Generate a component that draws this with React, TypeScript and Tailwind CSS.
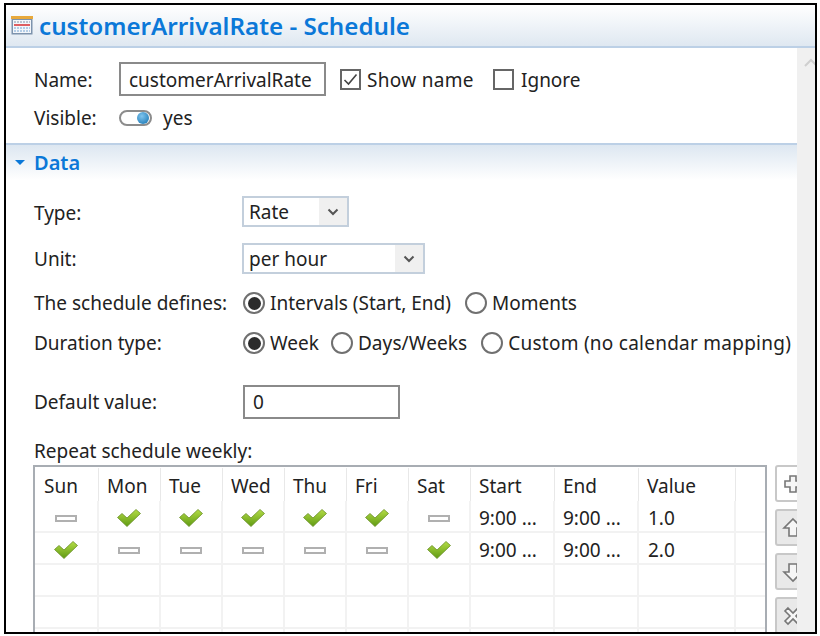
const TABLE_COLS = "grid grid-cols-[64px_62px_62px_62px_62px_62px_62px_84px_84px_97px_1fr]";

const HEADERS = ["Sun", "Mon", "Tue", "Wed", "Thu", "Fri", "Sat", "Start", "End", "Value", ""];

const ROWS = [
  { days: [false, true, true, true, true, true, false], start: "9:00 ...", end: "9:00 ...", value: "1.0" },
  { days: [true, false, false, false, false, false, true], start: "9:00 ...", end: "9:00 ...", value: "2.0" },
];

const CalendarIcon = () => (
  <svg width="22" height="19" viewBox="0 0 22 19" className="shrink-0">
    <rect x="0.5" y="0.5" width="21" height="18" fill="#7d93ad" />
    <rect x="0" y="0" width="22" height="3" fill="#e8a93c" />
    <rect x="2" y="4" width="18" height="13" fill="#f3f6fa" />
    <path d="M3 6h16" stroke="#a9b4c2" strokeWidth="1.5" strokeDasharray="2 1" />
    <path d="M3 9h16" stroke="#d9383a" strokeWidth="1.6" />
    <path d="M3 12h16M3 15h16" stroke="#9fc0e0" strokeWidth="1.5" strokeDasharray="2 1" />
  </svg>
);

const CheckIcon = () => (
  <svg width="24" height="18" viewBox="0 0 24 18" className="shrink-0">
    <defs>
      <linearGradient id="chk" x1="0" y1="0" x2="0" y2="1">
        <stop offset="0" stopColor="#b4dc46" />
        <stop offset="1" stopColor="#5f9a12" />
      </linearGradient>
    </defs>
    <path d="M0.5 8.5 L5 4.5 L10 9 L19 0.5 L23.5 4.5 L10 17.5 Z" fill="url(#chk)" stroke="#6b8f2a" strokeWidth="0.8" />
  </svg>
);

const DashIcon = () => <span className="block w-[22px] h-[7px] border-2 border-[#b0b0b0] bg-white" />;

const Radio = ({ checked }: { checked?: boolean }) => (
  <span className="w-[22px] h-[22px] rounded-full border-2 border-[#707070] bg-white flex items-center justify-center shrink-0">
    {checked && <span className="w-[13px] h-[13px] rounded-full bg-[#2b2b2b]" />}
  </span>
);

const RadioOption = ({ label, checked, className }: { label: string; checked?: boolean; className?: string }) => (
  <div className={`flex items-center gap-[5px] ${className ?? ""}`}>
    <Radio checked={checked} />
    <span>{label}</span>
  </div>
);

const Select = ({ value, width }: { value: string; width: string }) => (
  <div className={`flex h-[31px] border-2 border-[#c3cfdc] bg-white ${width}`}>
    <span className="flex-1 pl-[5px] leading-[29px]">{value}</span>
    <span className="w-[28px] bg-[#f0f0f0] flex items-center justify-center">
      <svg width="12" height="8" viewBox="0 0 12 8">
        <path d="M1.5 1.5 L6 6 L10.5 1.5" fill="none" stroke="#555" strokeWidth="2" />
      </svg>
    </span>
  </div>
);

const SideButton = ({ active, children }: { active?: boolean; children: React.ReactNode }) => (
  <div
    className={`w-[34px] h-[37px] rounded-[3px] border-2 border-[#c8c8c8] flex items-center pl-[5px] ${
      active ? "bg-white" : "bg-[#e9e9e9]"
    }`}
  >
    <svg width="22" height="22" viewBox="0 0 22 22" fill="#f6f6f6" stroke="#777" strokeWidth="1.6">
      {children}
    </svg>
  </div>
);

export default function App() {
  return (
    <div className="w-[820px] h-[636px] bg-white pl-[4px] pt-[3px] pr-[3px] pb-[2px] font-['Noto_Sans',sans-serif] text-[19px] text-[#222]">
      <div className="h-full flex flex-col border-2 border-black overflow-hidden">
        {/* Title bar */}
        <div className="h-[43px] shrink-0 flex items-center gap-[6px] pl-[5px] bg-gradient-to-b from-white to-[#dfe8f1] border-b-2 border-[#bcd0e6]">
          <CalendarIcon />
          <span className="text-[24.2px] font-semibold text-[#0b78d8] leading-none pt-[2px]">customerArrivalRate - Schedule</span>
        </div>

        <div className="flex-1 flex min-h-0">
          <div className="flex-1 min-w-0 overflow-hidden">
            {/* Name block */}
            <div className="flex items-center h-[34px] mt-[14px] pl-[28px]">
              <span className="w-[85px] pt-[2px]">Name:</span>
              <div className="w-[207px] h-[34px] border-2 border-[#8a8a8a] pl-[8px] leading-[32px] whitespace-nowrap overflow-hidden">
                customerArrivalRate
              </div>
              <span className="ml-[14px] w-[21px] h-[21px] shrink-0 border-2 border-[#666] flex items-center justify-center">
                <svg width="15" height="13" viewBox="0 0 15 13">
                  <path d="M1.5 7 L5.5 11 L13.5 1.5" fill="none" stroke="#444" strokeWidth="1.6" />
                </svg>
              </span>
              <span className="ml-[6px] pt-[2px] w-[107px] whitespace-nowrap tracking-[0.3px]">Show name</span>
              <span className="ml-[19px] w-[21px] h-[21px] shrink-0 border-2 border-[#666]" />
              <span className="ml-[7px] pt-[2px]">Ignore</span>
            </div>
            <div className="flex items-center h-[18px] mt-[13px] pl-[28px]">
              <span className="w-[85px]">Visible:</span>
              <span className="w-[33px] h-[16px] rounded-full border-2 border-[#8c8c8c] bg-white flex items-center justify-end pr-[1px]">
                <span className="w-[12px] h-[12px] rounded-full bg-[radial-gradient(circle_at_40%_35%,#7fc4ee,#0f6fae)]" />
              </span>
              <span className="ml-[11px]">yes</span>
            </div>

            {/* Data section */}
            <div className="h-[37px] mt-[16px] flex items-center pl-[9px] gap-[9px] bg-gradient-to-b from-[#dde7f1] to-white border-t-2 border-[#bcd0e6]">
              <svg width="10" height="5" viewBox="0 0 10 5">
                <path d="M0 0 H10 L5 5 Z" fill="#0b78d8" />
              </svg>
              <span className="text-[20px] font-semibold text-[#0b78d8]">Data</span>
            </div>

            <div className="pl-[28px]">
              <div className="flex items-center h-[31px] mt-[16px]">
                <span className="w-[208px] pt-[4px]">Type:</span>
                <Select value="Rate" width="w-[107px]" />
              </div>
              <div className="flex items-center h-[31px] mt-[16px]">
                <span className="w-[208px] pt-[2px]">Unit:</span>
                <Select value="per hour" width="w-[183px]" />
              </div>
              <div className="flex items-center h-[22px] mt-[18px]">
                <span className="w-[209px] whitespace-nowrap">The schedule defines:</span>
                <div className="flex gap-[14px]">
                  <RadioOption label="Intervals (Start, End)" checked />
                  <RadioOption label="Moments" />
                </div>
              </div>
              <div className="flex items-center h-[22px] mt-[18px]">
                <span className="w-[209px]">Duration type:</span>
                <div className="flex gap-[12px] whitespace-nowrap">
                  <RadioOption label="Week" checked />
                  <RadioOption label="Days/Weeks" className="tracking-[0.1px]" />
                  <RadioOption label="Custom (no calendar mapping)" className="ml-[2px] tracking-[0.25px]" />
                </div>
              </div>
              <div className="flex items-center h-[34px] mt-[31px]">
                <span className="w-[209px]">Default value:</span>
                <div className="w-[157px] h-[34px] border-2 border-[#8a8a8a] pl-[8px] leading-[30px]">0</div>
              </div>
              <div className="h-[24px] mt-[20px] leading-[24px]">Repeat schedule weekly:</div>

              {/* Table with its side buttons */}
              <div className="flex gap-[8px] mt-[2px] ml-[-1px] w-[800px]">
                <div className="w-[734px] h-[300px] shrink-0 border-2 border-[#a8adb3] text-center">
                  <div className={`${TABLE_COLS} h-[33px] mt-[1px]`}>
                    {HEADERS.map((h, i) => (
                      <div key={i} className="border-r border-[#e8e8e8] pl-[8px] first:pl-[9px] text-left leading-[36px] last:border-r-0">
                        {h}
                      </div>
                    ))}
                  </div>
                  {[...ROWS, null, null, null, null].map((row, r) => (
                    <div key={r} className={`${TABLE_COLS} h-[32px] border-b-2 border-[#f2f2f2]`}>
                      {Array.from({ length: 7 }).map((_, d) => (
                        <div key={d} className="border-r-2 border-[#f2f2f2] flex items-center justify-center">
                          {row && (row.days[d] ? <CheckIcon /> : <DashIcon />)}
                        </div>
                      ))}
                      <div className="border-r-2 border-[#f2f2f2] pl-[8px] text-left leading-[34px]">{row?.start}</div>
                      <div className="border-r-2 border-[#f2f2f2] pl-[8px] text-left leading-[34px]">{row?.end}</div>
                      <div className="border-r-2 border-[#f2f2f2] pl-[9px] text-left leading-[34px]">{row?.value}</div>
                      <div />
                    </div>
                  ))}
                </div>
                <div className="flex flex-col gap-[7px] shrink-0">
                  <SideButton active>
                    <path d="M8 3h6v5h5v6h-5v5H8v-5H3V8h5z" />
                  </SideButton>
                  <SideButton>
                    <path d="M11 2l9 9h-5v8H7v-8H2z" />
                  </SideButton>
                  <SideButton>
                    <path d="M7 3h8v8h5l-9 9-9-9h5z" />
                  </SideButton>
                  <SideButton>
                    <path d="M6 3l5 5 5-5 3 3-5 5 5 5-3 3-5-5-5 5-3-3 5-5-5-5z" />
                  </SideButton>
                </div>
              </div>
            </div>
          </div>

          {/* Scrollbar strip */}
          <div className="w-[18px] shrink-0 bg-[#f0f0f0] pt-[10px] pl-[7px] overflow-hidden">
            <svg width="14" height="9" viewBox="0 0 14 9">
              <path d="M1 8 L7 2 L13 8" fill="none" stroke="#cfcfcf" strokeWidth="2" />
            </svg>
          </div>
        </div>
      </div>
    </div>
  );
}
